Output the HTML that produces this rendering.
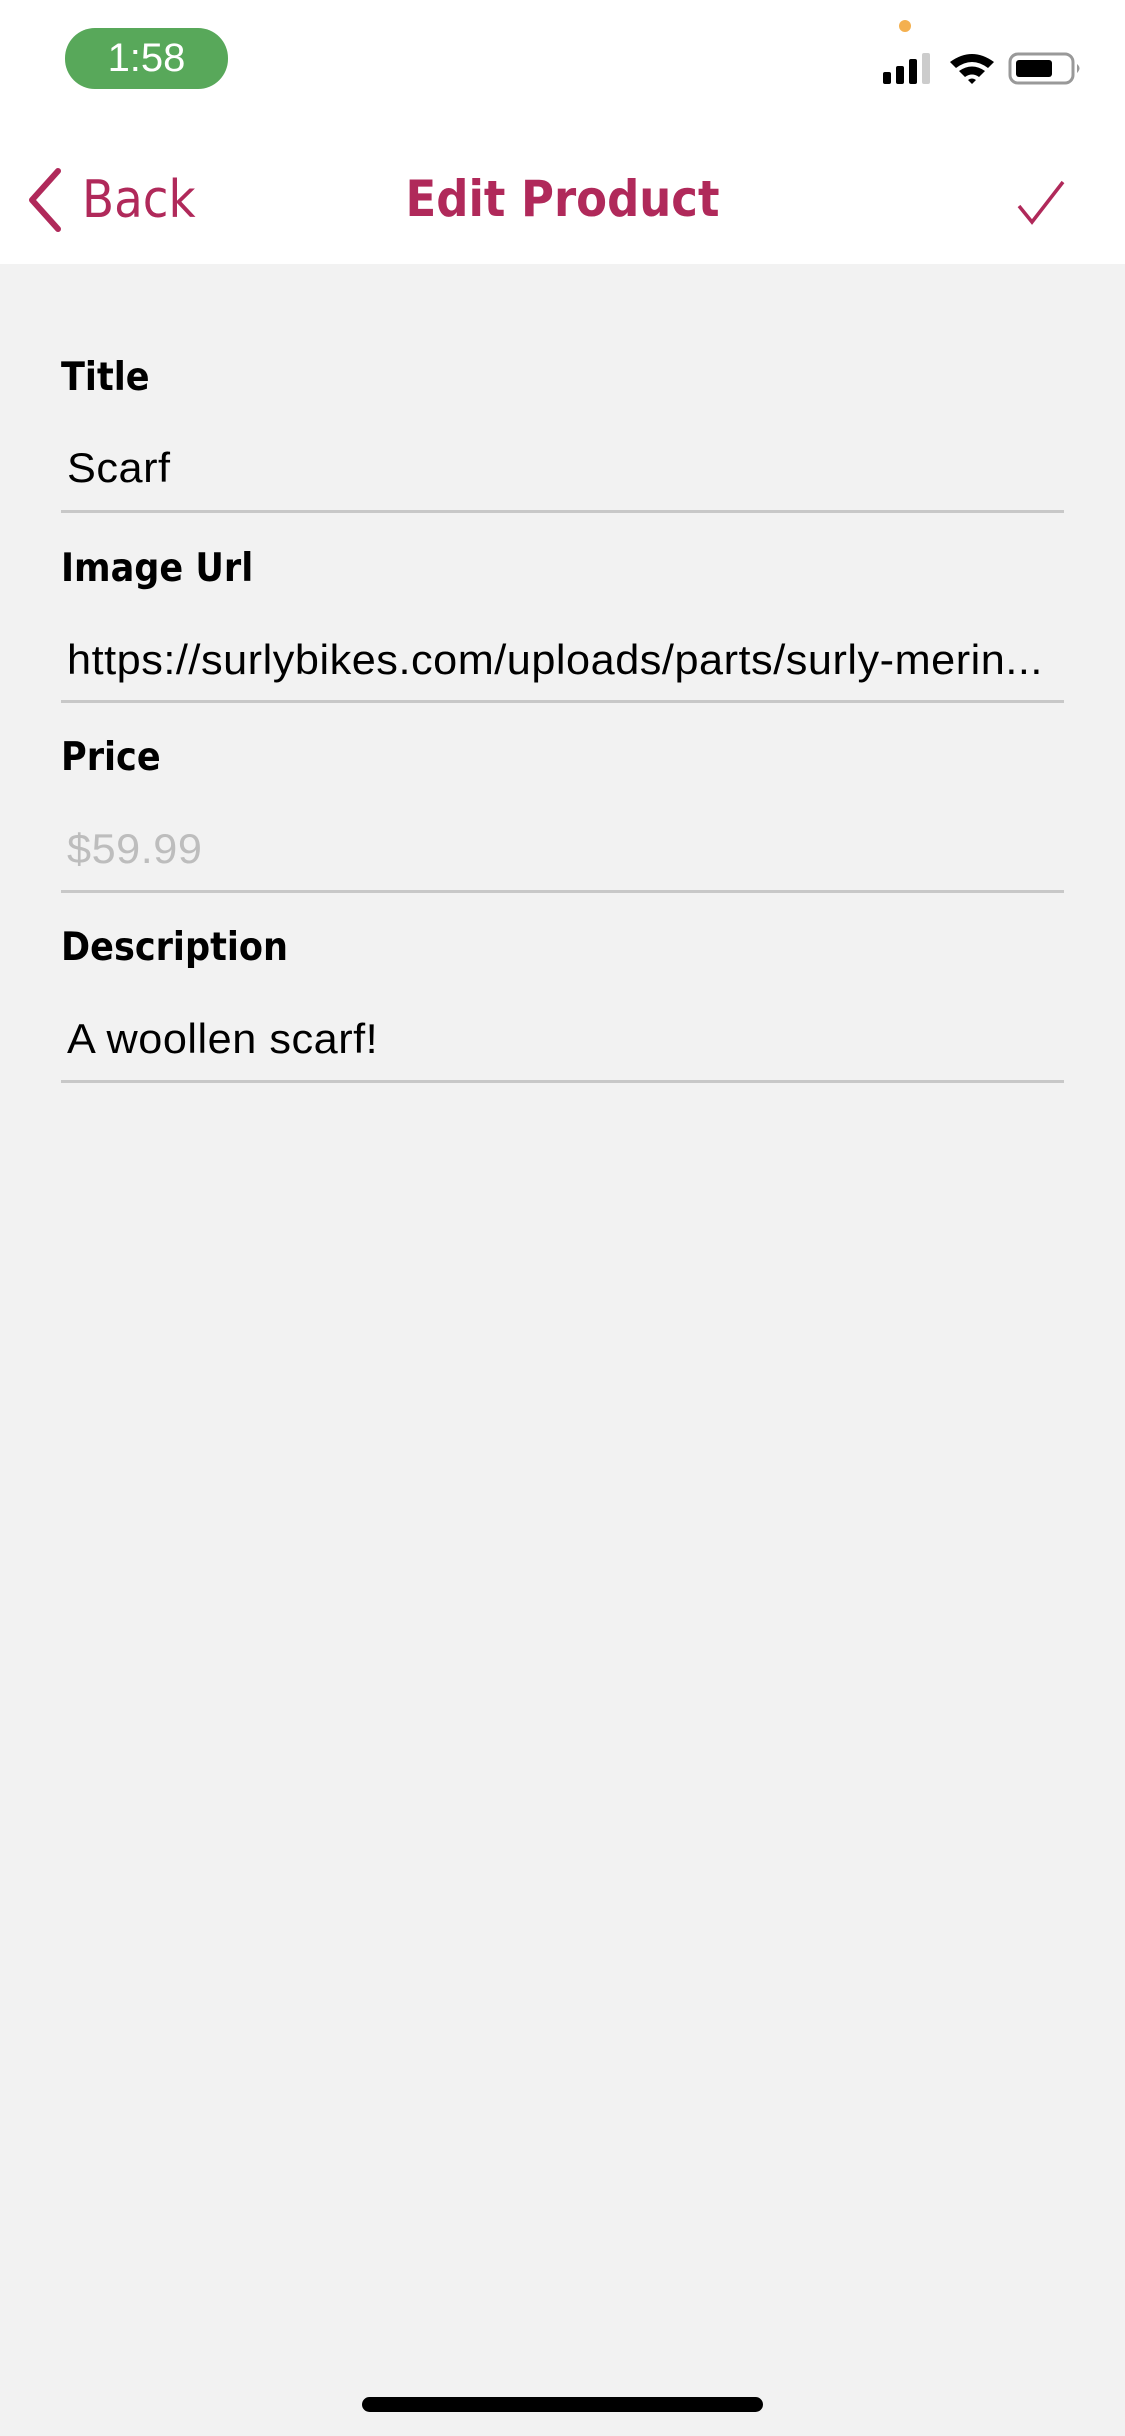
<!DOCTYPE html>
<html><head><meta charset="utf-8"><style>
*{margin:0;padding:0;box-sizing:border-box}
body{width:1125px;height:2436px;background:#f2f2f2;position:relative;overflow:hidden;font-family:"Liberation Sans",sans-serif}
.hdr{position:absolute;left:0;top:0;width:1125px;height:264px;background:#fff}
.pill{position:absolute;left:65px;top:28px;width:163px;height:61px;border-radius:30px;background:#58a85a;color:#fff;font-size:40px;text-align:center;line-height:61px}
.nav{position:absolute;color:#b0295a;font-family:"DejaVu Sans Condensed","Liberation Sans",sans-serif}
.lbl{position:absolute;left:61px;font-family:"DejaVu Sans Condensed","Liberation Sans",sans-serif;font-weight:bold;font-size:39px;color:#000}
.val{position:absolute;left:67px;font-size:42px;letter-spacing:0.5px;color:#000;white-space:nowrap;transform-origin:0 0;transform:scaleX(1.03)}
.line{position:absolute;left:61px;width:1003px;height:3px;background:#c8c8c8}
</style></head><body>
<div class="hdr"></div>
<div class="pill">1:58</div>
<div style="position:absolute;left:899px;top:20px;width:12px;height:12px;border-radius:6px;background:#f4b04f"></div>
<svg style="position:absolute;left:880px;top:50px" width="210" height="40">
<rect x="3" y="22" width="8" height="12" rx="2"/><rect x="16" y="16" width="8" height="18" rx="2"/><rect x="29" y="9" width="8" height="25" rx="2"/><rect x="42" y="3" width="8" height="31" rx="2" fill="#ccc"/>
<path d="M70 12 Q92 -4 114 12 L108 18 Q92 6 76 18Z M79 21 Q92 12 105 21 L99 27 Q92 22 85 27Z M88 30 Q92 27 96 30 L92 34Z" fill="#000"/>
<rect x="130" y="4" width="63" height="29" rx="8" fill="none" stroke="#999" stroke-width="3"/>
<rect x="136" y="10" width="36" height="17" rx="3"/>
<path d="M197 14 Q202 18 197 23Z" fill="#999"/>
</svg>
<svg style="position:absolute;left:20px;top:165px" width="50" height="70"><path d="M38 6 L12 35 L38 64" fill="none" stroke="#b0295a" stroke-width="6" stroke-linecap="round" stroke-linejoin="round"/></svg>
<div class="nav" style="left:82px;top:170px;font-size:52px">Back</div>
<div class="nav" style="left:0;width:1125px;text-align:center;top:170px;font-size:50px;font-weight:bold">Edit Product</div>
<svg style="position:absolute;left:1015px;top:178px" width="55" height="50"><path d="M4 28 L17 44 L48 4" fill="none" stroke="#b0295a" stroke-width="3.5"/></svg>

<div class="lbl" style="top:355px">Title</div>
<div class="val" style="top:444px">Scarf</div>
<div class="line" style="top:510px"></div>
<div class="lbl" style="top:546px">Image Url</div>
<div class="val" style="top:636px">https://surlybikes.com/uploads/parts/surly-merin...</div>
<div class="line" style="top:700px"></div>
<div class="lbl" style="top:735px">Price</div>
<div class="val" style="top:825px;color:#bdbdbd">$59.99</div>
<div class="line" style="top:890px"></div>
<div class="lbl" style="top:925px">Description</div>
<div class="val" style="top:1015px">A woollen scarf!</div>
<div class="line" style="top:1080px"></div>
<div style="position:absolute;left:362px;top:2397px;width:401px;height:15px;border-radius:8px;background:#000"></div>
</body></html>
